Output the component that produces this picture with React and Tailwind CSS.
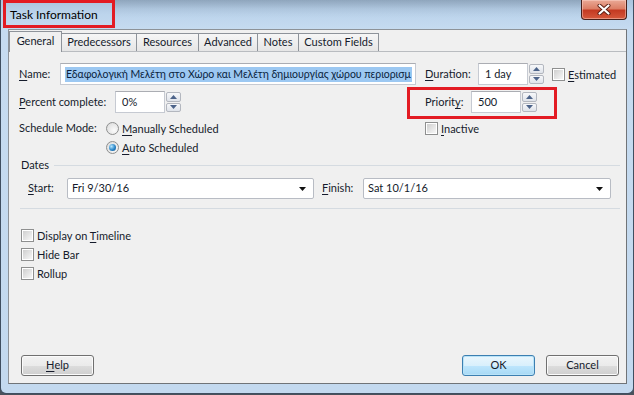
import React from 'react';

const U = ({ children }) => (
  <span className="underline underline-offset-[2px] decoration-[1px]">{children}</span>
);

const Check = ({ children }) => (
  <div className="flex items-center h-[13px]">
    <div className="w-[13px] h-[13px] border border-[#8e8f8f] bg-white p-[1px] shrink-0">
      <div className="w-full h-full bg-[linear-gradient(135deg,#cfcfcf,#f7f7f7)]" />
    </div>
    <span className="ml-[3px] leading-[13px]">{children}</span>
  </div>
);

const Radio = ({ checked, children }) => (
  <div className="flex items-center h-[13px]">
    <div className="w-[13px] h-[13px] rounded-full border border-[#8e8f8f] bg-[radial-gradient(circle_at_65%_65%,#fbfbfb,#d8d8d8)] flex items-center justify-center shrink-0">
      {checked && (
        <div className="w-[7px] h-[7px] rounded-full bg-[radial-gradient(circle_at_35%_35%,#b7e7ff,#2a86c8_55%,#0d4a86)]" />
      )}
    </div>
    <span className="ml-[3px] leading-[13px]">{children}</span>
  </div>
);

const Arrow = ({ down, color = '#4c6389' }) => (
  <svg width="7" height="4" viewBox="0 0 7 4">
    <path d={down ? 'M0 0 L7 0 L3.5 4 Z' : 'M0 4 L3.5 0 L7 4 Z'} fill={color} />
  </svg>
);

const Spinner = () => (
  <div className="ml-[1px] w-[15px] h-[20px] flex flex-col gap-px shrink-0">
    <div className="flex-1 rounded-[2px] border border-[#b3b7bf] bg-[linear-gradient(#f7f8fa,#dfe3ea)] flex items-center justify-center">
      <Arrow />
    </div>
    <div className="flex-1 rounded-[2px] border border-[#b3b7bf] bg-[linear-gradient(#f7f8fa,#dfe3ea)] flex items-center justify-center">
      <Arrow down />
    </div>
  </div>
);

const TextBox = ({ className, children }) => (
  <div
    className={
      'h-[22px] bg-white border border-[#c6cad2] border-t-[#abadb3] flex items-center pl-[4px] overflow-hidden whitespace-nowrap shrink-0 ' +
      className
    }
  >
    {children}
  </div>
);

const Combo = ({ className, value }) => (
  <div
    className={
      'h-[21px] bg-white border border-[#b8bcc4] rounded-[2px] flex items-center pl-[4px] pr-[7px] shrink-0 ' +
      className
    }
  >
    <span className="flex-1">{value}</span>
    <Arrow down color="#111111" />
  </div>
);

const Button = ({ primary, children }) => (
  <div
    className={
      primary
        ? 'w-[73px] h-[21px] rounded-[3px] border border-[#3c7fb1] bg-[linear-gradient(#eaf6fd_0%,#d9f0fc_50%,#bee6fd_51%,#a7d9f5_100%)] shadow-[inset_0_0_0_1px_#b9e3f8] flex items-center justify-center'
        : 'w-[73px] h-[21px] rounded-[3px] border border-[#707070] bg-[linear-gradient(#f2f2f2_0%,#ebebeb_50%,#dddddd_51%,#cfcfcf_100%)] shadow-[inset_0_0_0_1px_#fbfbfb] flex items-center justify-center'
    }
  >
    {children}
  </div>
);

const tabs = ['Predecessors', 'Resources', 'Advanced', 'Notes', 'Custom Fields'];
const tabWidths = ['w-[75px]', 'w-[62px]', 'w-[59px]', 'w-[41px]', 'w-[80px]'];

export default function App() {
  return (
    <div className="w-[634px] h-[395px] overflow-hidden bg-[#4a525c] font-['Lato','Noto_Sans',sans-serif] text-[11px] text-[#151b2b]">
      <div className="relative w-[634px] h-[394px] flex flex-col rounded-b-[6px] border border-t-0 border-[#3f4e60] bg-[linear-gradient(180deg,#aac3dd_0px,#bcd4ec_14px,#c6dbf0_30px,#c3d9ef_100%)]">
        {/* title bar */}
        <div className="h-[29px] flex shrink-0">
          <div className="w-[114px] pl-[9px] pt-[7px] text-[12px] leading-[15px] text-black">Task Information</div>
          <div className="flex-1 bg-[linear-gradient(180deg,rgba(92,110,128,0.35)_0px,rgba(140,160,180,0.18)_9px,rgba(190,210,230,0)_18px)]" />
          <div className="w-[46px] h-[20px] mr-[6px] rounded-b-[4px] border border-t-0 border-[#47201a] bg-[linear-gradient(#eaa996_0%,#dc7f66_45%,#c43a22_55%,#d6593c_100%)] shadow-[inset_0_0_0_1px_rgba(255,220,210,0.45)] flex items-center justify-center">
            <svg width="14" height="11" viewBox="0 0 14 11">
              <path d="M2.5 1.5 L11.5 9.5 M11.5 1.5 L2.5 9.5" stroke="#5a1d12" strokeWidth="4" strokeLinecap="round" />
              <path d="M2.5 1.5 L11.5 9.5 M11.5 1.5 L2.5 9.5" stroke="#ffffff" strokeWidth="2.2" strokeLinecap="round" />
            </svg>
          </div>
        </div>

        {/* client area */}
        <div className="ml-[7px] mr-[6px] h-[355px] border border-[#8d9298] border-r-[#707478] border-b-[#707478] bg-[#f0f0f0] flex flex-col">
          {/* tabs */}
          <div className="mt-[1px] h-[20px] flex items-end shrink-0">
            <div className="relative z-10 -mb-px w-[53px] h-[21px] bg-[#f0f0f0] border border-b-0 border-[#8e939a] flex items-center justify-center pb-[2px]">
              General
            </div>
            {tabs.map((t, i) => (
              <div
                key={t}
                className={
                  'h-[18px] border border-l-0 border-b-0 border-[#8e939a] bg-[linear-gradient(#f6f6f6,#e6e6e6)] flex items-center justify-center ' +
                  tabWidths[i]
                }
              >
                {t}
              </div>
            ))}
          </div>

          {/* panel */}
          <div className="flex-1 border-t border-[#b9bcc0] flex flex-col pl-[10px] pr-[6px] pb-[7px]">
            {/* name / duration */}
            <div className="mt-[11px] h-[22px] flex items-center">
              <span className="w-[41px]"><U>N</U>ame:</span>
              <TextBox className="w-[356px]">
                <span className="bg-[#9cc8f2] text-[#0a1f3d] px-[1px] leading-[15px] text-[10.5px] tracking-[-0.05px]">
                  Εδαφολογική Μελέτη στο Χώρο και Μελέτη δημιουργίας χώρου περιορισμ
                </span>
              </TextBox>
              <span className="ml-[9px] w-[53px]"><U>D</U>uration:</span>
              <TextBox className="w-[50px] pl-[6px]">1 day</TextBox>
              <Spinner />
              <div className="ml-[8px]">
                <Check><U>E</U>stimated</Check>
              </div>
            </div>

            {/* percent / priority */}
            <div className="mt-[6px] h-[22px] flex items-center">
              <span className="w-[96px]"><U>P</U>ercent complete:</span>
              <TextBox className="w-[50px] pl-[6px]">0%</TextBox>
              <Spinner />
              <span className="ml-[244px] w-[46px]">Priorit<U>y</U>:</span>
              <TextBox className="w-[50px] pl-[6px]">500</TextBox>
              <Spinner />
            </div>

            {/* schedule mode */}
            <div className="mt-[9px] h-[13px] flex items-center">
              <span className="w-[87px]">Schedule Mode:</span>
              <div className="w-[319px]">
                <Radio><U>M</U>anually Scheduled</Radio>
              </div>
              <Check><U>I</U>nactive</Check>
            </div>
            <div className="mt-[6px] h-[13px] flex items-center pl-[87px]">
              <Radio checked><U>A</U>uto Scheduled</Radio>
            </div>

            {/* dates */}
            <div className="mt-[4px] h-[14px] flex items-center">
              <span className="ml-[2px]">Dates</span>
              <div className="flex-1 ml-[5px] h-px bg-[#d5dbe1]" />
            </div>
            <div className="mt-[6px] h-[21px] flex items-center">
              <span className="ml-[9px] w-[39px]"><U>S</U>tart:</span>
              <Combo className="w-[247px]" value="Fri 9/30/16" />
              <span className="ml-[8px] w-[41px]"><U>F</U>inish:</span>
              <Combo className="w-[248px]" value="Sat 10/1/16" />
            </div>
            <div className="mt-[9px] ml-[1px] h-px bg-[#d5dbe1]" />

            {/* options */}
            <div className="mt-[20px] ml-[2px]">
              <Check>Display on <U>T</U>imeline</Check>
            </div>
            <div className="mt-[6px] ml-[2px]">
              <Check>Hide Bar</Check>
            </div>
            <div className="mt-[6px] ml-[2px]">
              <Check>Rollup</Check>
            </div>

            {/* buttons */}
            <div className="mt-auto ml-[2px] mr-[1px] flex items-center gap-[11px]">
              <Button><U>H</U>elp</Button>
              <div className="ml-auto" />
              <Button primary>OK</Button>
              <Button>Cancel</Button>
            </div>
          </div>
        </div>

        {/* red annotation boxes */}
        <div className="absolute left-[2px] top-0 w-[112px] h-[28px] border-[3px] border-[#e31b23]" />
        <div className="absolute left-[406px] top-[87px] w-[150px] h-[32px] border-[3px] border-[#e31b23]" />
      </div>
    </div>
  );
}
